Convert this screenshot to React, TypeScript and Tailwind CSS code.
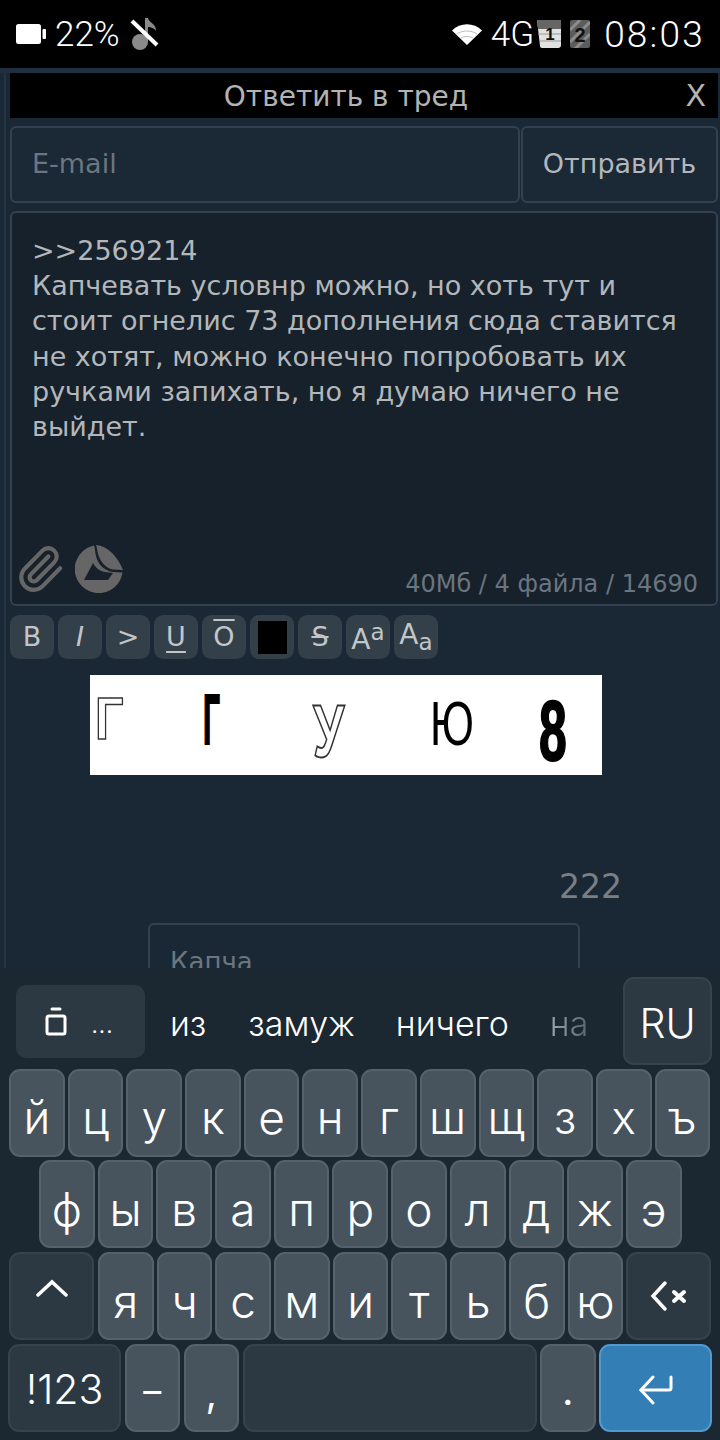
import { Paperclip } from "lucide-react";

const row1 = ["й", "ц", "у", "к", "е", "н", "г", "ш", "щ", "з", "х", "ъ"];
const row2 = ["ф", "ы", "в", "а", "п", "р", "о", "л", "д", "ж", "э"];
const row3 = ["я", "ч", "с", "м", "и", "т", "ь", "б", "ю"];

const tools = ["B", "I", ">", "U", "O", "", "S"];

const Key = ({ label, className = "" }: { label?: React.ReactNode; className?: string }) => (
  <div
    className={`flex h-[88px] items-center justify-center rounded-[11px] border-2 border-[#56626b] bg-[#47545d] pt-[10px] text-[46px] font-light text-white ${className}`}
  >
    {label}
  </div>
);

const DarkKey = ({ label, className = "" }: { label?: React.ReactNode; className?: string }) => (
  <div
    className={`flex h-[88px] items-center justify-center rounded-[11px] border-2 border-[#36434c] bg-[#2c3943] text-white ${className}`}
  >
    {label}
  </div>
);

const StatusBar = () => (
  <div className="flex h-[68px] shrink-0 items-center justify-between bg-black pl-[16px] pr-[15px] font-['Roboto',sans-serif] text-[35px] font-light text-white">
    <div className="flex items-center">
      <svg width="31" height="20" viewBox="0 0 31 20">
        <rect x="0" y="0" width="25" height="20" rx="2.5" fill="#fff" />
        <rect x="26.5" y="5" width="3.5" height="10" rx="1" fill="#fff" />
      </svg>
      <span className="ml-[8px] mt-[2px]">22%</span>
      <svg className="ml-[10px]" width="29" height="33" viewBox="0 0 29 33">
        <circle cx="10" cy="24" r="8" fill="#8a8a8a" />
        <path d="M15 24V0h3c1 5 8 5 8 13-2-3-5-4-8-4v15z" fill="#8a8a8a" />
        <path d="M2 3l25 24" stroke="#fff" strokeWidth="4" />
      </svg>
    </div>
    <div className="flex items-center">
      <svg width="30" height="21" viewBox="0 0 30 21">
        <path d="M0 6.5C8-2 22-2 30 6.5L15 21z" fill="#fff" />
        <path d="M5 10c5-4 15-4 20 0M9 14c3-2 9-2 12 0" stroke="#bbb" strokeWidth="1" fill="none" />
      </svg>
      <span className="ml-[9px] mt-[2px] text-[35px]">4G</span>
      <svg className="ml-[3px]" width="24" height="28" viewBox="0 0 24 28">
        <path d="M0 0h24v25a3 3 0 0 1-3 3H5a2 2 0 0 1-2-2z" fill="#e2e2e2" />
        <path d="M0 0h24v9H1z" fill="#666" />
        <path d="M1 14h23M3 21h21" stroke="#999" strokeWidth="1" />
        <text x="13" y="20" fontSize="17" fontWeight="700" fontFamily="'Liberation Sans',sans-serif" textAnchor="middle" fill="#111">1</text>
      </svg>
      <svg className="ml-[9px]" width="20" height="28" viewBox="0 0 20 28">
        <rect width="20" height="28" rx="2" fill="#5c5c5c" />
        <path d="M0 10L10 0M0 22L20 2M4 30L20 14" stroke="#8c8c8c" strokeWidth="3" />
        <text x="10" y="22" fontSize="20" fontWeight="700" fontFamily="'Liberation Sans',sans-serif" textAnchor="middle" fill="#111">2</text>
      </svg>
      <span className="ml-[14px] mt-[2px] text-[37px] tracking-[2.2px]">08:03</span>
    </div>
  </div>
);

const StickerIcon = () => (
  <svg className="ml-[10px]" width="48" height="48" viewBox="0 0 48 48">
    <path d="M19 .6A24 24 0 1 0 47.5 27.5L38 27C30 26 23 20 21 11 20 7 20 3 19 .6z" fill="#666" />
    <path d="M21 0C33 1 43 12 48 25L38 24.5C30 23 25 16 23 9 22 5 22 2 21 0z" fill="#666" />
    <path d="M9 35L18 18C20 22 24 26 30 27L38 28 33 35z" fill="#18212b" />
  </svg>
);

const Form = () => (
  <div className="flex h-[900px] shrink-0 flex-col overflow-hidden border-t-[5px] border-[#213040] bg-[#1a2734]">
    <div className="flex h-full pl-[4px]">
      <div className="h-full w-[6px] shrink-0 border-l-2 border-[#243443]" />
      <div className="flex w-[708px] shrink-0 flex-col font-['DejaVu_Sans',sans-serif]">
        <div className="relative h-[45px] shrink-0 bg-black pr-[36px] pt-[3px] text-center text-[28px] text-[#b3b3b3]">
          Ответить в тред
          <span className="absolute right-[12px] top-[5px] text-[30px] leading-[36px]">X</span>
        </div>
        <div className="mt-[8px] flex h-[77px] shrink-0 gap-px">
          <div className="flex flex-1 items-center rounded-[6px] border-2 border-[#33414e] bg-[#1b2835] px-[20px] text-[27px] text-[#6b7681]">
            E-mail
          </div>
          <div className="flex w-[197px] items-center justify-center rounded-[6px] border-2 border-[#33414e] bg-[#1b2835] text-[27px] text-[#b3b7ba]">
            Отправить
          </div>
        </div>
        <div className="mt-[8px] flex h-[395px] shrink-0 flex-col rounded-[6px] border-2 border-[#33414e] bg-[#17212b] pl-[20px] pr-[18px] pt-[20px] text-[27px] leading-[35.2px] text-[#b3b7ba]">
          <div className="h-[312px]">
            {">>2569214"}
            <br />
            Капчевать условнр можно, но хоть тут и
            <br />
            стоит огнелис 73 дополнения сюда ставится
            <br />
            не хотят, можно конечно попробовать их
            <br />
            ручками запихать, но я думаю ничего не
            <br />
            выйдет.
          </div>
          <div className="flex items-start justify-between">
            <div className="-ml-[17px] flex items-center">
              <Paperclip size={50} strokeWidth={2} color="#666" className="-my-1" />
              <StickerIcon />
            </div>
            <span className="mt-[24px] text-[24px] leading-[30px] text-[#6b7580]">40Мб / 4 файла / 14690</span>
          </div>
        </div>
        <div className="mt-[9px] flex h-[44px] shrink-0 gap-[4px]">
          {tools.map((t, i) => (
            <div
              key={i}
              className={`flex h-[44px] w-[44px] items-center justify-center rounded-[9px] bg-[#334049] text-[27px] text-[#c3c6c8] ${
                t === "I" ? "italic" : ""
              } ${t === "U" ? "underline underline-offset-[5px]" : ""} ${t === "O" ? "overline" : ""} ${
                t === "S" ? "line-through" : ""
              }`}
            >
              {t === "" ? <div className="h-[33px] w-[29px] bg-black" /> : t}
            </div>
          ))}
          <div className="flex h-[44px] w-[44px] items-center justify-center rounded-[9px] bg-[#334049] text-[28px] text-[#c3c6c8]">
            <span className="mt-[6px]">A</span>
            <span className="-mt-[10px] text-[23px]">a</span>
          </div>
          <div className="flex h-[44px] w-[44px] items-center justify-center rounded-[9px] bg-[#334049] text-[28px] text-[#c3c6c8]">
            <span className="-mt-[4px]">A</span>
            <span className="mt-[10px] text-[23px]">a</span>
          </div>
        </div>
        {/* captcha picture, squeezed letters */}
        <div className="ml-[80px] mt-[16px] flex h-[100px] w-[512px] shrink-0 items-center bg-white font-['Liberation_Sans',sans-serif] leading-none text-black">
          <span className="ml-[5px] inline-block w-[108px] origin-left -translate-y-[6px] scale-x-[0.85] text-[59px] font-bold text-white [-webkit-text-stroke:1.5px_#333]">Г</span>
          <span className="inline-block w-[110px] origin-left -translate-y-[6px] scale-x-[0.42] text-[71px] font-bold [-webkit-text-stroke:2px_#000]">Г</span>
          <span className="inline-block w-[117px] origin-left translate-y-[7px] scale-x-[0.68] text-[74px] font-bold text-white [-webkit-text-stroke:2px_#333]">У</span>
          <span className="inline-block w-[109px] origin-left -translate-y-[2px] scale-x-[0.69] text-[63px]">Ю</span>
          <span className="inline-block origin-left translate-y-[5px] scale-x-[0.58] text-[86px] font-bold [-webkit-text-stroke:2px_#000]">8</span>
        </div>
        <div className="mt-[92px] shrink-0 pr-[96px] text-right text-[33px] leading-[40px] text-[#7b7f83]">222</div>
        <div className="ml-[138px] mt-[16px] h-[80px] w-[432px] shrink-0 rounded-[6px] border-2 border-[#33414e] px-[20px] pt-[19px] text-[26px] leading-[36px] text-[#6b7681]">
          Капча
        </div>
      </div>
    </div>
  </div>
);

const Keyboard = () => (
  <div className="flex h-[472px] shrink-0 flex-col gap-[3.7px] bg-[#1b2731] pl-[9px] pt-[9px] font-['Inter',sans-serif]">
    <div className="flex h-[88px] items-center pl-[7px] text-[34px] font-light text-white">
      <div className="flex h-[73px] w-[129px] items-center rounded-[10px] bg-[#2c3943] pl-[29px]">
        <svg width="22" height="29" viewBox="0 0 22 29" fill="none">
          <path d="M7 2h8" stroke="#fff" strokeWidth="3" strokeLinecap="round" />
          <rect x="2" y="9" width="18" height="18" rx="2" stroke="#fff" strokeWidth="3" />
        </svg>
        <span className="ml-[24px] mt-[4px] text-[26px]">...</span>
      </div>
      <span className="ml-[25px] mt-[5px]">из</span>
      <span className="ml-[42px] mt-[5px]">замуж</span>
      <span className="ml-[41px] mt-[5px]">ничего</span>
      <span className="ml-[41px] mt-[5px] bg-linear-to-r from-[#9aa5ac] to-[#59666f] bg-clip-text text-transparent">на</span>
      <DarkKey className="ml-auto mr-[8px] w-[89px] pt-[5px] text-[41px] font-light" label="RU" />
    </div>
    <div className="flex gap-[3px]">
      {row1.map((k) => (
        <Key key={k} label={k} className="w-[55.7px]" />
      ))}
    </div>
    <div className="flex gap-[3px] pl-[30px]">
      {row2.map((k) => (
        <Key key={k} label={k} className="w-[55.7px]" />
      ))}
    </div>
    <div className="flex gap-[3px]">
      <DarkKey
        className="mr-px w-[85px]"
        label={
          <svg className="-mt-[16px]" width="32" height="18" viewBox="0 0 32 18" fill="none">
            <path d="M2 16L16 3l14 13" stroke="#fff" strokeWidth="3.5" strokeLinecap="round" />
          </svg>
        }
      />
      {row3.map((k) => (
        <Key key={k} label={k} className="w-[55.7px]" />
      ))}
      <DarkKey
        className="w-[85px]"
        label={
          <svg width="38" height="32" viewBox="0 0 38 32" fill="none">
            <path d="M15 3L3 16l12 13" stroke="#fff" strokeWidth="3.5" strokeLinecap="round" />
            <path d="M24 12l10 9M34 12l-10 9" stroke="#fff" strokeWidth="4" strokeLinecap="round" />
          </svg>
        }
      />
    </div>
    <div className="-ml-px flex gap-[3.5px]">
      <DarkKey className="w-[113px] pt-[4px] text-[41px] font-light" label="!123" />
      <Key className="w-[55.5px] !pt-[6px] !text-[36px] !font-normal" label="–" />
      <Key className="w-[55.5px] !pt-[10px] !text-[40px] !font-normal" label="," />
      <DarkKey className="w-[294px]" />
      <Key className="w-[55.5px] !pt-[6px] !text-[40px] !font-normal" label="." />
      <div className="flex h-[88px] w-[113px] items-center justify-center rounded-[11px] border-2 border-[#5199d0] bg-[#337fb5] pt-[4px]">
        <svg width="36" height="30" viewBox="0 0 36 30" fill="none">
          <path d="M33 2v11a2 2 0 0 1-2 2H3" stroke="#fff" strokeWidth="3" strokeLinecap="round" />
          <path d="M15 2L3 15l12 13" stroke="#fff" strokeWidth="3" strokeLinecap="round" />
        </svg>
      </div>
    </div>
  </div>
);

export default function App() {
  return (
    <div className="flex h-[1440px] w-[720px] flex-col overflow-hidden bg-[#1a2734]">
      <StatusBar />
      <Form />
      <Keyboard />
    </div>
  );
}
